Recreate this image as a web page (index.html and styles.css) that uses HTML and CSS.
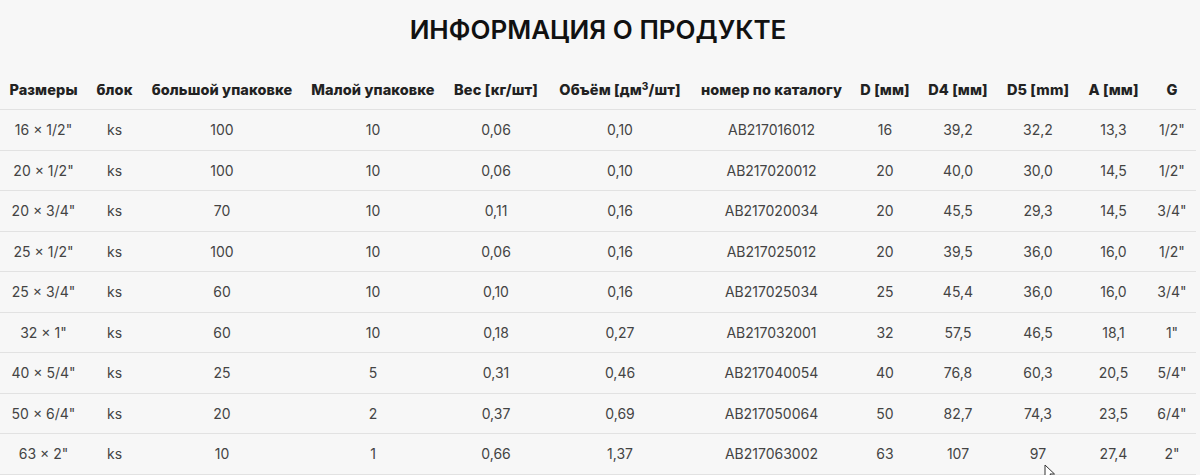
FILE: index.html
```html
<!DOCTYPE html>
<html lang="ru">
<head>
<meta charset="utf-8">
<title>Информация о продукте</title>
<link rel="stylesheet" href="styles.css">
</head>
<body>
<main class="page">
  <h1 class="title">ИНФОРМАЦИЯ О ПРОДУКТЕ</h1>
  <table class="spec">
    <colgroup>
      <col class="w1"><col class="w2"><col class="w3"><col class="w4"><col class="w5"><col class="w6">
      <col class="w7"><col class="w8"><col class="w9"><col class="w10"><col class="w11"><col class="w12">
    </colgroup>
    <thead>
      <tr>
        <th>Размеры</th><th>блок</th><th>большой упаковке</th><th>Малой упаковке</th><th>Вес [кг/шт]</th><th>Объём [дм<sup>3</sup>/шт]</th><th>номер по каталогу</th><th>D [мм]</th><th>D4 [мм]</th><th>D5 [mm]</th><th>A [мм]</th><th>G</th>
      </tr>
    </thead>
    <tbody>
      <tr><td>16 × 1/2"</td><td>ks</td><td>100</td><td>10</td><td>0,06</td><td>0,10</td><td>AB217016012</td><td>16</td><td>39,2</td><td>32,2</td><td>13,3</td><td>1/2"</td></tr>
      <tr><td>20 × 1/2"</td><td>ks</td><td>100</td><td>10</td><td>0,06</td><td>0,10</td><td>AB217020012</td><td>20</td><td>40,0</td><td>30,0</td><td>14,5</td><td>1/2"</td></tr>
      <tr><td>20 × 3/4"</td><td>ks</td><td>70</td><td>10</td><td>0,11</td><td>0,16</td><td>AB217020034</td><td>20</td><td>45,5</td><td>29,3</td><td>14,5</td><td>3/4"</td></tr>
      <tr><td>25 × 1/2"</td><td>ks</td><td>100</td><td>10</td><td>0,06</td><td>0,16</td><td>AB217025012</td><td>20</td><td>39,5</td><td>36,0</td><td>16,0</td><td>1/2"</td></tr>
      <tr><td>25 × 3/4"</td><td>ks</td><td>60</td><td>10</td><td>0,10</td><td>0,16</td><td>AB217025034</td><td>25</td><td>45,4</td><td>36,0</td><td>16,0</td><td>3/4"</td></tr>
      <tr><td>32 × 1"</td><td>ks</td><td>60</td><td>10</td><td>0,18</td><td>0,27</td><td>AB217032001</td><td>32</td><td>57,5</td><td>46,5</td><td>18,1</td><td>1"</td></tr>
      <tr><td>40 × 5/4"</td><td>ks</td><td>25</td><td>5</td><td>0,31</td><td>0,46</td><td>AB217040054</td><td>40</td><td>76,8</td><td>60,3</td><td>20,5</td><td>5/4"</td></tr>
      <tr><td>50 × 6/4"</td><td>ks</td><td>20</td><td>2</td><td>0,37</td><td>0,69</td><td>AB217050064</td><td>50</td><td>82,7</td><td>74,3</td><td>23,5</td><td>6/4"</td></tr>
      <tr><td>63 × 2"</td><td>ks</td><td>10</td><td>1</td><td>0,66</td><td>1,37</td><td>AB217063002</td><td>63</td><td>107</td><td>97</td><td>27,4</td><td>2"</td></tr>
    </tbody>
  </table>
  <svg class="cursor" width="12" height="18" viewBox="0 0 12 18" aria-hidden="true">
    <path d="M1 1 L1 14 L4 11 L6.5 16.5 L8.5 15.5 L6 10 L10.5 10 Z" fill="#fff" stroke="#333" stroke-width="1"/>
  </svg>
</main>
</body>
</html>
```

FILE: styles.css
```css
html, body {
  margin: 0;
  padding: 0;
  background: #f7f7f7;
}
body {
  font-family: Inter, "Noto Sans", "Liberation Sans", sans-serif;
  color: #444;
  overflow: hidden;
}
.page {
  position: relative;
  width: 1196px;
}
.title {
  margin: 0;
  height: 69px;
  padding-top: 13px;
  box-sizing: border-box;
  font-size: 26px;
  line-height: 34px;
  font-weight: 600;
  color: #111;
  text-align: center;
  letter-spacing: 0;
}
.spec {
  width: 1196px;
  border-collapse: collapse;
  table-layout: fixed;
}
.w1 { width: 87px; }
.w2 { width: 55px; }
.w3 { width: 160px; }
.w4 { width: 142px; }
.w5 { width: 104px; }
.w6 { width: 144px; }
.w7 { width: 159px; }
.w8 { width: 68px; }
.w9 { width: 78px; }
.w10 { width: 82px; }
.w11 { width: 69px; }
.w12 { width: 48px; }
.spec th,
.spec td {
  padding: 0;
  text-align: center;
  white-space: nowrap;
  border-bottom: 1px solid #e2e2e2;
}
.spec th {
  height: 40px;
  font-size: 14.5px;
  font-weight: 800;
  letter-spacing: 0.1px;
  color: #222;
}
.spec th sup {
  font-size: 10px;
  line-height: 0;
  vertical-align: 5px;
}
.spec td {
  height: 39.5px;
  font-size: 14px;
  font-weight: 400;
  color: #444;
}
.cursor {
  position: absolute;
  left: 1044px;
  top: 464px;
}
```
